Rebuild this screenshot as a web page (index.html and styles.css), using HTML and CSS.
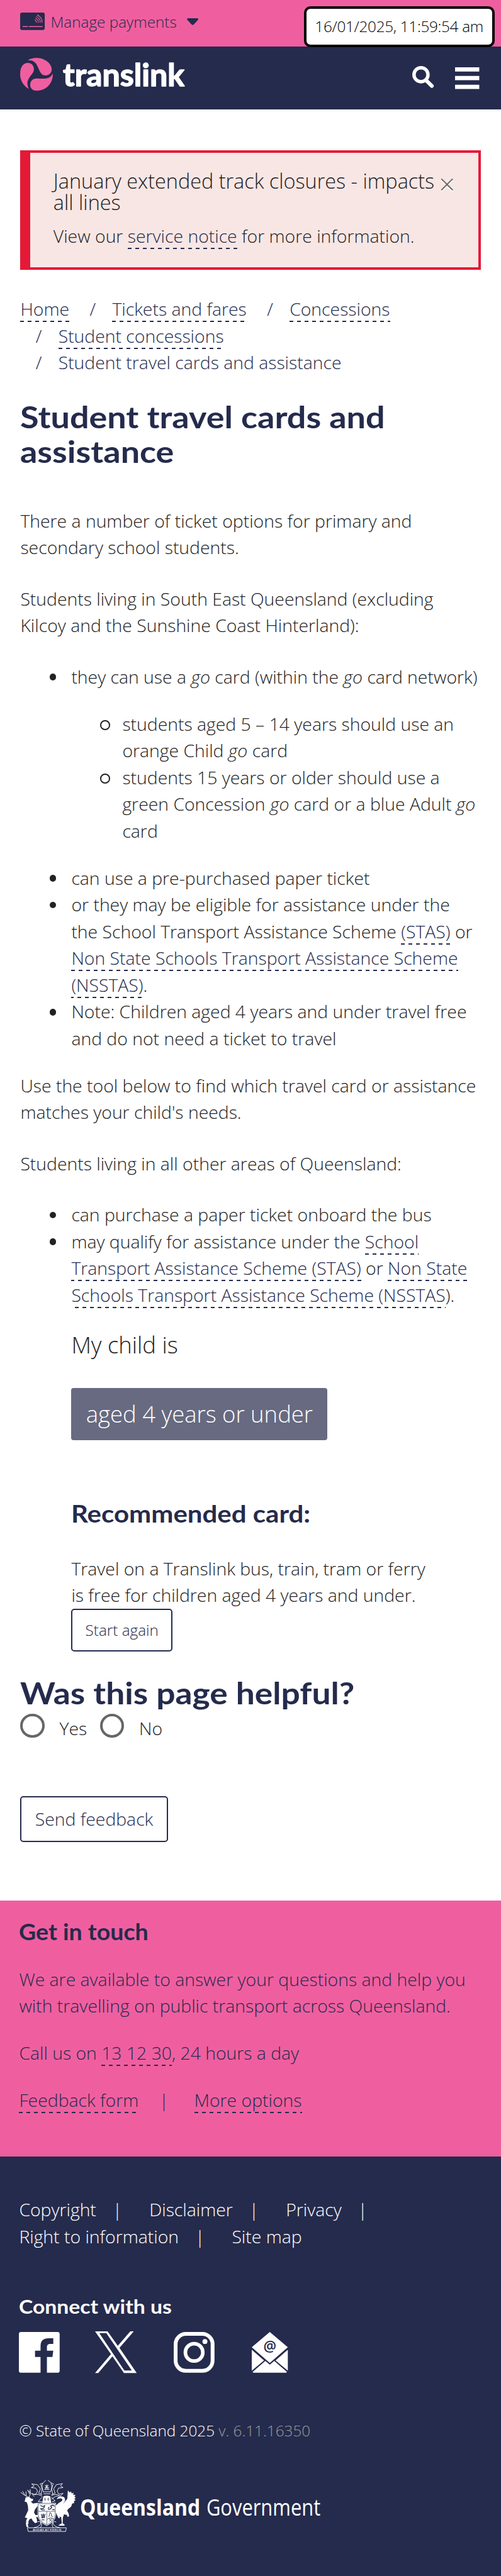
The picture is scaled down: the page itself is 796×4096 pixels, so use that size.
FILE: index.html
```html
<!DOCTYPE html>
<html lang="en">
<head>
<meta charset="utf-8">
<title>Student travel cards and assistance | Translink</title>
<link rel="stylesheet" href="styles.css">
</head>
<body>
<div class="topbar">
  <svg class="card-icon" viewBox="41 27 174 123"><rect x="41" y="27" width="174" height="123" rx="14" fill="#252b4c"/><g fill="none" stroke="#ef5fa0" stroke-linecap="round"><path d="M61 126H93M105 126H197" stroke-width="7"/><path d="M146 78q10 5 11 19M150 67q20 8 20 30M156 56q28 12 27 41M162 44q36 15 34 53" stroke-width="5"/></g></svg>
  <span class="topbar-label">Manage payments</span>
  <svg class="caret" viewBox="0 0 27 16"><path d="M2 0h23q3 1 1 4L16 15q-2.500 2-5 0L1 4Q-1 1 2 0z" fill="#252b4c"/></svg>
  <div class="clock">16/01/2025, 11:59:54 am</div>
</div>
<header class="header">
  <svg class="logo" viewBox="36 350 232 233">
    <g fill="#ef5fa0">
      <path d="M90 367C108 355 130 350 152 350C215 352 258 393 259 430C259 458 238 474 214 474C182 474 173 440 160 412C146 380 125 366 90 367z"/>
      <path d="M98 569C60 548 36 510 36 465C36 415 57 386 91 386C116 386 133 405 133 430C133 455 116 466 102 488C82 518 84 542 98 569z"/>
      <path d="M267 461C268 530 220 582 152 582C124 582 107 563 107 542C107 512 126 495 152 495C195 495 240 510 267 461z"/>
    </g>
  </svg>
  <svg class="wordmark-box" viewBox="0 0 196 52"><text class="wordmark" x="1" y="44.500" textLength="193" lengthAdjust="spacingAndGlyphs">translink</text></svg>
  <svg class="search" viewBox="0 0 50 51"><circle cx="20.500" cy="20.500" r="16.500" fill="none" stroke="#fff" stroke-width="8"/><path d="M32 33L46 47" stroke="#fff" stroke-width="9" stroke-linecap="round"/></svg>
  <svg class="burger" viewBox="0 0 57 51"><path d="M0 0h57v10H0zM0 20.500h57v10H0zM0 41h57v10H0z" fill="#fff"/></svg>
</header>

<main class="main">
  <section class="alert">
    <span class="alert-close">×</span>
    <h2 class="alert-title">January extended track closures - impacts<br>all lines</h2>
    <p class="alert-text">View our <a class="link">service notice</a> for more information.</p>
  </section>

  <ol class="crumbs">
    <li class="crumb"><a class="link">Home</a></li>
    <li class="crumb"><a class="link">Tickets and fares</a></li>
    <li class="crumb"><a class="link">Concessions</a></li>
    <li class="crumb"><a class="link">Student concessions</a></li>
    <li class="crumb">Student travel cards and assistance</li>
  </ol>

  <h1 class="title">Student travel cards and<br>assistance</h1>
  <div class="copy">
    <p>There a number of ticket options for primary and<br>secondary school students.</p>
    <p>Students living in South East Queensland (excluding<br>Kilcoy and the Sunshine Coast Hinterland):</p>
    <ul class="list">
      <li>they can use a <em>go</em> card (within the <em>go</em> card network)
        <ul class="sublist">
          <li>students aged 5 – 14 years should use an<br>orange Child <em>go</em> card</li>
          <li>students 15 years or older should use a<br>green Concession <em>go</em> card or a blue Adult <em>go</em><br>card</li>
        </ul>
      </li>
      <li>can use a pre-purchased paper ticket</li>
      <li>or they may be eligible for assistance under the<br>the School Transport Assistance Scheme <a class="link">(STAS)</a> or<br><a class="link">Non State Schools Transport Assistance Scheme<br>(NSSTAS)</a>.</li>
      <li>Note: Children aged 4 years and under travel free<br>and do not need a ticket to travel</li>
    </ul>
    <p>Use the tool below to find which travel card or assistance<br>matches your child's needs.</p>
    <p>Students living in all other areas of Queensland:</p>
    <ul class="list">
      <li>can purchase a paper ticket onboard the bus</li>
      <li>may qualify for assistance under the <a class="link">School<br>Transport Assistance Scheme (STAS)</a> or <a class="link">Non State<br>Schools Transport Assistance Scheme (NSSTAS</a>).</li>
    </ul>
  </div>

  <section class="tool">
    <div class="question">My child is</div>
    <button class="answer">aged 4 years or under</button>
    <h3 class="result-title">Recommended card:</h3>
    <p class="result">Travel on a Translink bus, train, tram or ferry<br>is free for children aged 4 years and under.</p>
    <button class="restart">Start again</button>
  </section>

  <section class="helpful">
    <h2 class="title helpful-title">Was this page helpful?</h2>
    <div class="radios">
      <span class="radio"></span><span class="radio-label">Yes</span>
      <span class="radio"></span><span class="radio-label">No</span>
    </div>
    <button class="feedback">Send feedback</button>
  </section>
</main>

<section class="touch">
  <h2 class="touch-title">Get in touch</h2>
  <p>We are available to answer your questions and help you<br>with travelling on public transport across Queensland.</p>
  <p>Call us on <a class="link">13 12 30</a>, 24 hours a day</p>
  <p class="touch-links"><a class="link">Feedback form</a><span class="touch-bar">|</span><a class="link">More options</a></p>
</section>

<footer class="footer">
  <div class="foot-row"><span>Copyright</span><span class="bar">|</span><span>Disclaimer</span><span class="bar">|</span><span>Privacy</span><span class="bar">|</span></div>
  <div class="foot-row"><span>Right to information</span><span class="bar">|</span><span>Site map</span></div>
  <h2 class="connect">Connect with us</h2>
  <div class="social">
    <svg class="ico-fb" viewBox="0 0 96 96"><path d="M5 0h86q5 0 5 5v86q0 5-5 5H66V59h13l2-15H66v-9q0-7 8-7h7V15H70Q51 15 51 33v11H38v15h13v37H5q-5 0-5-5V5q0-5 5-5z" fill="#fff"/></svg>
    <svg class="ico-x" viewBox="0 0 98 98"><path d="M0 0h29.500l24 34L83 0h8L57.500 39 98 98H68L41 59 7.500 98H0L37.500 53.500zM10 4l59 88h17.500L26.500 4z" fill="#fff" fill-rule="evenodd"/></svg>
    <svg class="ico-ig" viewBox="0 0 96 96"><g fill="none" stroke="#fff"><rect x="4.500" y="4.500" width="87" height="87" rx="24" stroke-width="9"/><circle cx="48" cy="48" r="20.500" stroke-width="8.500"/></g><circle cx="73.500" cy="22.500" r="5.800" fill="#fff"/></svg>
    <svg class="ico-mail" viewBox="0 0 85 96"><g fill="#fff"><path d="M42.500 0L85 36 42.500 73 0 36z"/><path d="M0 42l29 25L0 91zM85 42L56 67l29 24z"/><path d="M32 68l10.500 9L53 68l30 26q-1 2-3 2H5q-2 0-3-2z"/></g><text class="at" x="42.500" y="46" text-anchor="middle">@</text></svg>
  </div>
  <div class="legal">© State of Queensland 2025 <span class="version">v. 6.11.16350</span></div>
  <svg class="crest" viewBox="145 127 1870 368">
    <g fill="#fff">
      <path d="M184 250l26-2 12 12 15 3-2 12-14 6 14 14 32-5 4 18-22 30-6 20 10 18 20 0-4 16-12-4 6 18 2 22-14 6-16-16-10-18-14 6-8 16 2 14-6 4 5 22-14-2-4-22 2-26 8-14-18-4 12-26 12-26-2-30-8-26-16-6 2-4z"/>
      <path d="M404 262q10-20 34-17 28 2 24 30l-14 22 30-36 4-58 14 14 8-8 6 16 12-8-2 18 16-2-8 14 10 4-10 12 9 8-12 6 2 14-14 4-8 22-22 18-6 10 10 20 4 20-12 4-4-14-20-4-8 22-2 42 12 6 2 10-44 0 10-10 14-6-4-44-12-4 2 12-10-2-16-34-4-30 4-26 18-16 20-12q12-12 2-18-10-6-34 3z"/>
      <path d="M268 290h130v85q-3 48-65 77-62-29-65-77z"/>
      <path d="M301 290l7-45q25-12 50 0l6 45z"/>
    </g>
    <g fill="none" stroke="#fff" stroke-width="4" stroke-linejoin="round">
      <path d="M203 250l-30-16-24-18M180 238l-18-30M188 242l-2-32M206 250l12-22-2-34M214 230l-18-32M216 222l-10-20"/>
      <path d="M327 130l-20 20-24 8M341 130l22 18 20 10M305 150q-12 30 6 62M362 150q14 30-4 62M307 212h54M310 226h48M292 160l8 36-8 34M376 160l-8 36 8 34"/>
      <path d="M300 232l-24-10 12-30-20-30-42-6 18 14-20 12 32 4 12 22-16 26-26-12 18 24M366 232l26-10-10-30 18-30 44-8-14 16 18 12-32 4-10 22 14 22 28-8-16 18-36 4-30 20"/>
      <path d="M300 244q-22-18-62-14M300 250l-28 30 28 2M366 250l26 26-22 6M366 240q26-16 54-4"/>
      <path d="M322 172h22M333 160v30M318 184h32M316 196h36M322 164l22 28M344 164l-22 28"/>
      <path d="M242 466q50-10 48-38-8-10-22-4M286 466q18-14 4-46M425 466q-50-10-48-38 8-10 22-4M381 466q-18-14-4-46M196 466l6 26h264l5-26z"/>
    </g>
    <g fill="none" stroke="#252b4c" stroke-width="3">
      <path d="M273 296h120v78q-4 44-60 72-56-28-60-72zM273 350h120M333 350v96"/>
      <path d="M314 264h15M321 252v26M336 264h16M344 252v26M308 236h52" />
      <path d="M288 308l16 8 14-6-6 18-22 4 10 8h20M342 336l14-2 12-10-8-12 16-6 12 8M350 320l-8 10M372 338h16" stroke-width="6"/>
      <path d="M294 368l8 26 6-28 6 28 7-26M294 394h26M298 410h18" stroke-width="5"/>
      <path d="M345 388l6-4v-14l7-12 8 12v14l12 6M337 406q22-18 46 0M350 402l20 20M370 402l-20 20" stroke-width="4"/>
    </g>
    <text class="motto" x="234" y="486" textLength="202" lengthAdjust="spacingAndGlyphs">AUDAX AT FIDELIS</text>
    <text class="qld" x="567" y="379" textLength="850" lengthAdjust="spacingAndGlyphs">Queensland</text>
    <text class="gov" x="1460" y="379" textLength="806" lengthAdjust="spacingAndGlyphs">Government</text>
  </svg>
</footer>
</body>
</html>
```
FILE: styles.css
```css
html { font-size: 20.25px; }
* { box-sizing: border-box; }
body {
  margin: 0;
  min-height: 4096px;
  display: flex;
  flex-direction: column;
  background: #fff;
  color: #222;
  font-family: "Open Sans", "Noto Sans", sans-serif;
  font-weight: 300;
  font-size: 1.4rem;
  line-height: 2.1rem;
}
p, ul, ol, h1, h2, h3 { margin: 0; padding: 0; }
svg { display: block; flex: none; overflow: visible; }
button { font: inherit; margin: 0; display: flex; align-items: center; justify-content: center; white-space: nowrap; }

.link {
  color: #252b4c;
  padding-bottom: 2px;
  background: linear-gradient(90deg, #252b4c 50%, transparent 50%) 0 100% / 12px 2px repeat-x;
}

.topbar {
  position: relative;
  height: 3.63rem;
  padding: 0.83rem 0 0 1.6rem;
  display: flex;
  align-items: flex-start;
  background: #ef5fa0;
  color: #252b4c;
  font-size: 1.2rem;
  line-height: 1.8rem;
}
.card-icon { width: 1.93rem; height: 1.37rem; margin-top: 0.14rem; }
.topbar-label { margin-left: 0.44rem; }
.caret { width: 0.9rem; height: 0.53rem; margin: 0.58rem 0 0 0.8rem; }
.clock {
  position: absolute;
  left: 23.83rem;
  top: 0.5rem;
  width: 14.97rem;
  height: 3.22rem;
  border: 0.2rem solid #000;
  border-radius: 0.5rem;
  background: #fff;
  color: #000;
  text-align: center;
  white-space: nowrap;
  letter-spacing: -0.3px;
  line-height: 2.75rem;
}

.header {
  height: 4.97rem;
  padding: 0.92rem 1.73rem 0 1.6rem;
  display: flex;
  align-items: flex-start;
  background: #252b4c;
}
.logo { width: 2.58rem; height: 2.59rem; }
.wordmark-box { width: 196px; height: 52px; margin: 0 auto 0 0.7rem; }
.wordmark { font: 700 50px Lato, sans-serif; fill: #fff; stroke: #fff; stroke-width: 1.5px; stroke-linejoin: round; }
.search { width: 1.67rem; height: 1.7rem; margin-top: 0.62rem; }
.burger { width: 1.9rem; height: 1.7rem; margin: 0.75rem 0 0 1.67rem; }

.main { padding: 3.2rem 1.6rem 4.62rem; }
.alert {
  position: relative;
  height: 9.38rem;
  padding: 1.33rem 1rem 0 1.8rem;
  border: 0.2rem solid #e41937;
  border-left-width: 0.8rem;
  background: #f8e6e4;
}
.alert-title { font-weight: 300; font-size: 1.6rem; line-height: 1.7rem; margin-bottom: 0.77rem; white-space: nowrap; }
.alert-close {
  position: absolute;
  left: 32.05rem;
  top: 1.4rem;
  color: #666;
  font-size: 2.2rem;
  text-shadow: 0 2px 0 #fff;
}

.crumbs {
  display: flex;
  flex-wrap: wrap;
  column-gap: 0.4rem;
  margin-top: 2.03rem;
  list-style: none;
  color: #252b4c;
}
.crumb + .crumb::before { content: "/"; margin: 0 1.3rem 0 1.2rem; }

/* Headings use slightly widened letterforms. */
.title, .result-title, .touch-title, .connect {
  width: fit-content;
  transform: scaleX(1.11);
  transform-origin: 0 0;
  white-space: nowrap;
}
.title {
  margin-top: 1.87rem;
  color: #252b4c;
  font: 700 2.4rem/2.68rem Lato, sans-serif;
}
.copy { margin-top: 3.1rem; white-space: nowrap; }
.copy p { margin-bottom: 1.92rem; }
.list { padding-left: 4rem; margin-bottom: 1.6rem; list-style: none; }
.list li { position: relative; }
.list li::before {
  content: "";
  position: absolute;
  left: -1.71rem;
  top: 0.82rem;
  width: 0.53rem;
  height: 0.53rem;
  border-radius: 50%;
  background: #222;
}
.sublist { padding-left: 4rem; margin: 1.6rem 0; list-style: none; }
.list .sublist li::before {
  left: -1.76rem;
  top: 0.78rem;
  width: 0.58rem;
  height: 0.58rem;
  border: 0.13rem solid #222;
  background: none;
}

.tool { margin: 1.88rem 0 0 4rem; white-space: nowrap; }
.question { font-size: 1.8rem; line-height: 2rem; }
.answer {
  margin-top: 2.4rem;
  width: 20.1rem;
  height: 4.08rem;
  border: 0;
  border-radius: 0.2rem;
  background: #676a81;
  color: #fff;
  font-size: 1.8rem;
}
.result-title {
  margin: 4.76rem 0 2.2rem;
  color: #252b4c;
  font: 700 1.9rem/2.07rem Lato, sans-serif;
  transform: scaleX(1.092);
}
.restart, .feedback {
  padding: 0;
  border: 0.1rem solid #252b4c;
  border-radius: 0.25rem;
  background: #fff;
  color: #252b4c;
}
.restart { width: 7.93rem; height: 3.37rem; font-size: 1.2rem; }

.helpful-title { margin-top: 1.87rem; transform: scaleX(1.098); }
.radios { display: flex; height: 2.2rem; margin-top: 0.32rem; }
.radio { width: 1.9rem; height: 1.9rem; border: 0.2rem solid #666; border-radius: 50%; }
.radio-label { margin: 0.1rem 1.02rem 0 1.17rem; }
.feedback { width: 11.57rem; height: 3.58rem; margin-top: 4.3rem; }

.touch {
  height: 20.1rem;
  padding: 1.48rem 1.5rem 0;
  background: #ef5fa0;
  color: #252b4c;
  white-space: nowrap;
}
.touch-title { font: 700 1.75rem/2rem Lato, sans-serif; transform: scaleX(1.06); margin-bottom: 1.64rem; }
.touch p { margin-bottom: 1.6rem; }
.touch-bar { margin: 0 2rem 0 1.6rem; }

.footer { flex: 1; padding: 3.1rem 1.5rem 0; background: #252b4c; color: #fff; }
.foot-row { display: flex; }
.bar { margin: 0 2.13rem 0 1.28rem; }
.connect { margin-top: 3.46rem; font: 700 1.55rem/2rem Lato, sans-serif; transform: scaleX(1.074); }
.social { display: flex; margin-top: 0.98rem; }
.ico-fb, .ico-ig { width: 3.2rem; height: 3.2rem; }
.ico-x { width: 3.27rem; height: 3.27rem; margin: -0.03rem 2.9rem 0 2.77rem; }
.ico-mail { width: 2.83rem; height: 3.2rem; margin-left: 2.93rem; }
.at { font: 600 34px "Open Sans", sans-serif; fill: #252b4c; }
.legal { margin-top: 3.63rem; font-size: 1.2rem; line-height: 1.8rem; }
.version { color: #999; }
.crest { width: 20.78rem; height: 4.09rem; margin: 2.97rem 0 0 0.1rem; }
.motto { font: 600 14px "Open Sans", sans-serif; fill: #fff; }
.qld { font: 700 162px "Open Sans", sans-serif; fill: #fff; }
.gov { font: 400 158px "Open Sans", sans-serif; fill: #fff; }
```
